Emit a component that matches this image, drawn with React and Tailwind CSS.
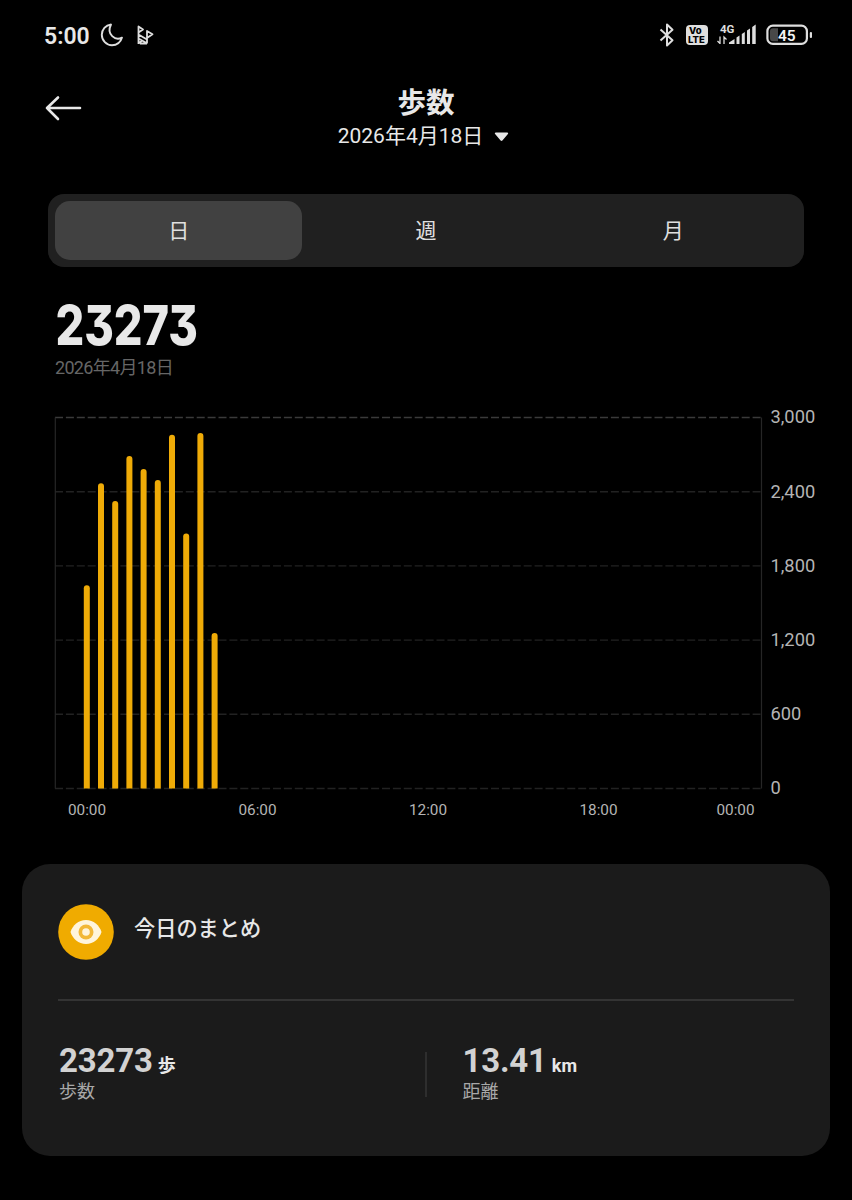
import React, { useState } from 'react';

const TABS = ['日', '週', '月'];

// steps per 30 minutes, starting at 00:00
const STEPS = [1643, 2468, 2325, 2689, 2584, 2495, 2861, 2061, 2875, 1258];

const Y_TICKS = [3000, 2400, 1800, 1200, 600, 0];

const X_TICKS = [
  { x: 39, label: '00:00' },
  { x: 209.5, label: '06:00' },
  { x: 380, label: '12:00' },
  { x: 550.5, label: '18:00' },
  { x: 687.5, label: '00:00' },
];

function StatusBar() {
  return (
    <div className="flex h-[70px] items-center justify-between pl-11 pr-10 text-[#dedede]">
      <div className="flex items-center">
        <span className="w-[56px] pt-[3px] text-[23px] font-semibold leading-none text-[#e8e8e8]">5:00</span>
        <svg width="24" height="24" viewBox="0 0 24 24" fill="none" stroke="currentColor" strokeWidth="1.900" strokeLinejoin="round">
          <path d="M11 1.500C5.600 2 1.800 6.600 1.800 11.800c0 5.700 4.600 10.400 10.200 10.400 4.700 0 8.800-3 10-7.600C15.500 18.200 6 11.500 11 1.500z" />
        </svg>
        <svg className="ml-3" width="18" height="22" viewBox="0 0 18 22" fill="none" stroke="currentColor" strokeWidth="1.800" strokeLinejoin="round">
          <path d="M2.500 20V2.500L7 5.500 2.500 8.500M11 19.500V7l5.500 3.300L11 14M2.500 10.500l8.500 5M2.500 14.500l8 4.500M2.500 19.500l3-2.500M4 19.500h7" />
        </svg>
      </div>
      <div className="flex items-center">
        <svg width="16" height="26" viewBox="0 0 16 26" fill="none" stroke="currentColor" strokeWidth="2" strokeLinejoin="round">
          <path d="M1.500 7.500l12 10.800L8 23.500V2.500l5.500 5.200L1.500 18.500" />
        </svg>
        <div className="ml-[11px] flex h-[20px] w-[22px] flex-col items-start justify-center rounded-[4px] bg-[#dedede] pl-[2px] font-['Inter',sans-serif] text-[9.500px] font-extrabold leading-[9px] text-black">
          <span className="pl-px">Vo</span>
          <span>LTE</span>
        </div>
        <svg className="ml-[8px]" width="40" height="26" viewBox="0 0 40 26" fill="currentColor">
          <text x="4" y="11" fontSize="11.500" fontWeight="700">4G</text>
          <path d="M4 14.500v7.500M1.500 19l2.500 2.500M8 22v-7l2.500 2.500" fill="none" stroke="currentColor" strokeWidth="1.300" />
          <path d="M13 22v-1.500l5.500-3.500V22zM20.500 22v-6.500l3-2V22zM25.800 22V12l3-2V22zM31 22V8.500l3-2V22zM36.200 22V5l3.500-2.500V22z" />
        </svg>
        <svg className="ml-[9px]" width="47" height="24" viewBox="0 0 47 24">
          <rect x="2.400" y="2.600" width="39.500" height="18.300" rx="5.500" fill="none" stroke="#dedede" strokeWidth="2.200" />
          <path d="M8 5.200h5v13H8a3 3 0 0 1-3-3v-7a3 3 0 0 1 3-3z" fill="#484848" />
          <rect x="44.800" y="9" width="2.200" height="6" rx="1" fill="#dedede" />
          <text x="21.800" y="17.500" textAnchor="middle" fontSize="15.500" fontWeight="600" fill="#f4f4f4">45</text>
        </svg>
      </div>
    </div>
  );
}

function Header() {
  return (
    <div className="flex h-[124px] items-start px-11">
      <button className="mt-[25px] w-[60px] text-[#e8e8e8]" aria-label="Back">
        <svg width="38" height="26" viewBox="0 0 38 26" fill="none" stroke="currentColor" strokeWidth="2.600" strokeLinecap="round" strokeLinejoin="round">
          <path d="M14 2.500L3 13l11 11M3 13h33" />
        </svg>
      </button>
      <div className="mt-[16px] flex flex-1 flex-col items-center">
        <h1 className="text-[28.500px] font-bold leading-[36px] text-[#e8e8e8]">歩数</h1>
        <button className="flex items-center gap-[11px] pr-[5px] text-[21px] leading-[29px] text-[#e8e8e8]">
          2026年4月18日
          <svg width="15" height="10" viewBox="0 0 15 10" fill="currentColor">
            <path d="M1.800 0.500h11.400c.9 0 1.300 1 .7 1.600L8.400 8.600c-.5.6-1.300.6-1.800 0L1.100 2.100C.5 1.500.9.5 1.800.5z" />
          </svg>
        </button>
      </div>
      <div className="w-[60px]" />
    </div>
  );
}

function StepChart() {
  const top = 17.5;
  const height = 371;
  const bottom = top + height;

  return (
    <svg className="mt-[18px] block" width="804" height="425" viewBox="0 0 804 425">
      {Y_TICKS.map((tick) => {
        const y = bottom - (tick / 3000) * height;
        return (
          <g key={tick}>
            <line
              x1="7"
              x2="713.5"
              y1={y}
              y2={y}
              stroke={tick === 3000 ? '#3a3a3a' : '#222222'}
              strokeWidth="1.4"
              strokeDasharray="8 2.900"
            />
            <text x="722.500" y={y + 5.8} fontSize="18.300" fill="#b4b4b4">
              {tick.toLocaleString('en-US')}
            </text>
          </g>
        );
      })}
      <path d={`M7.300 ${top}V${bottom}M713.500 ${top}V${bottom}`} stroke="#262626" strokeWidth="1.200" />
      {STEPS.map((value, i) => {
        const x = 35.8 + i * 14.2;
        const y = bottom - (value / 3000) * height;
        return (
          <path
            key={i}
            d={`M${x} ${bottom}V${y + 3}a3 3 0 0 1 6 0V${bottom}z`}
            fill="#efab07"
          />
        );
      })}
      {X_TICKS.map(({ x, label }) => (
        <text key={x} x={x} y="415.300" textAnchor="middle" fontSize="15.300" fill="#b4b4b4">
          {label}
        </text>
      ))}
    </svg>
  );
}

function Stat({ value, unit, label }) {
  return (
    <div className="pl-px pt-px">
      <div className="flex h-[36px] items-baseline gap-[5px] leading-[36px]">
        <span className="text-[33px] font-bold tracking-[-0.2px] text-[#d2d2d2]">{value}</span>
        <span className="text-[18px] font-bold text-[#e8e8e8]">{unit}</span>
      </div>
      <div className="text-[18px] leading-[25px] text-[#a8a8a8]">{label}</div>
    </div>
  );
}

function Summary() {
  return (
    <div className="mx-[22px] mt-[39px] h-[292px] rounded-[28px] bg-[#1b1b1b] px-9 pt-10">
      <div className="flex items-center">
        <svg width="56" height="56" viewBox="0 0 56 56">
          <circle cx="28" cy="28" r="27.800" fill="#f0ab00" />
          <path d="M12.500 28c2-6.500 8-12 15.500-12s13.500 5.500 15.500 12c-2 6.500-8 12-15.500 12s-13.500-5.500-15.500-12z" fill="#fff5dc" />
          <circle cx="28" cy="28" r="7.500" fill="#f2b838" />
          <circle cx="28" cy="28" r="3.800" fill="#fff5dc" />
        </svg>
        <h2 className="mb-[7px] ml-5 text-[21.200px] font-medium text-[#e8e8e8]">今日のまとめ</h2>
      </div>
      <div className="mt-[39px] h-[1.500px] bg-[#343434]" />
      <div className="mt-[41px] flex">
        <div className="w-[367px]">
          <Stat value="23273" unit="歩" label="歩数" />
        </div>
        <div className="mt-[10px] h-[45px] w-[1.500px] bg-[#2e2e2e]" />
        <div className="ml-[35px]">
          <Stat value="13.41" unit="km" label="距離" />
        </div>
      </div>
    </div>
  );
}

export default function App() {
  const [tab, setTab] = useState(0);

  return (
    <div lang="ja" className="h-[1200px] w-[852px] overflow-hidden bg-black font-['Roboto','Noto_Sans_CJK_JP',sans-serif]">
      <StatusBar />
      <Header />
      <div className="mx-12 flex h-[73px] rounded-[16px] bg-[#202020] p-[7px]">
        {TABS.map((name, i) => (
          <button
            key={name}
            onClick={() => setTab(i)}
            className={`flex-1 rounded-[15px] pt-[2px] text-[21px] text-[#e0e0e0] ${tab === i ? 'bg-[#414141]' : ''}`}
          >
            {name}
          </button>
        ))}
      </div>
      <div className="ml-12">
        <div className="mt-[31px] h-[56px] w-[180px] origin-left scale-x-[0.820] pl-[9px] font-['Inter',sans-serif] text-[55px] font-extrabold leading-[55px] text-[#e8e8e8] [font-feature-settings:'cv09']">
          23273
        </div>
        <div className="ml-[7px] text-[18px] leading-[28px] tracking-[-0.680px] text-[#666666]">2026年4月18日</div>
        <StepChart />
      </div>
      <Summary />
    </div>
  );
}
